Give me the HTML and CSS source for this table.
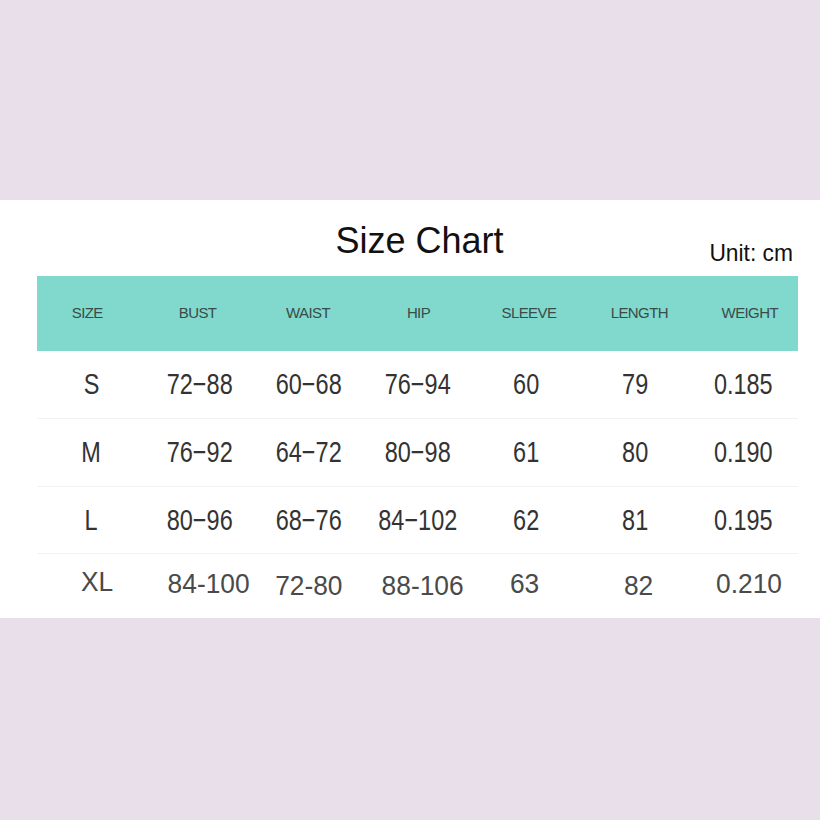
FILE: index.html
```html
<!DOCTYPE html>
<html>
<head>
<meta charset="utf-8">
<link rel="stylesheet" href="styles.css">
</head>
<body>
<div class="top"></div>
<section class="card">
  <div class="head">
    <div></div>
    <h1 class="title">Size Chart</h1>
    <div class="unit">Unit: cm</div>
  </div>
  <div class="table">
    <div class="hdr">
      <div class="cells">
        <span>SIZE</span><span>BUST</span><span>WAIST</span><span>HIP</span><span>SLEEVE</span><span>LENGTH</span><span>WEIGHT</span>
      </div>
    </div>
    <div class="row data r1">
      <span>S</span><span>72−88</span><span>60−68</span><span>76−94</span><span>60</span><span>79</span><span>0.185</span>
    </div>
    <div class="row data r2">
      <span>M</span><span>76−92</span><span>64−72</span><span>80−98</span><span>61</span><span>80</span><span>0.190</span>
    </div>
    <div class="row data r3">
      <span>L</span><span>80−96</span><span>68−76</span><span>84−102</span><span>62</span><span>81</span><span>0.195</span>
    </div>
    <div class="row data r4">
      <span class="c1">XL</span><span class="c2">84-100</span><span class="c3">72-80</span><span class="c4">88-106</span><span class="c5">63</span><span class="c6">82</span><span class="c7">0.210</span>
    </div>
  </div>
</section>
</body>
</html>
```
FILE: styles.css
```css
html, body {
  margin: 0;
  padding: 0;
  background: #e8dfeb;
  width: 820px;
  height: 820px;
  overflow: hidden;
}
.top { height: 200px; }
.card {
  background: #fff;
  height: 418px;
  font-family: "Liberation Sans", Arial, sans-serif;
  color: #333;
}
.head {
  height: 76px;
  display: grid;
  grid-template-columns: 1fr auto 1fr;
  align-items: start;
}
.title {
  margin: 21px 0 0;
  font-weight: normal;
  font-size: 36px;
  line-height: 40px;
  color: #111;
  padding-left: 19px;
}
.unit {
  justify-self: end;
  margin: 39px 27px 0 0;
  font-size: 24px;
  line-height: 28px;
  color: #111;
  display: inline-block;
  transform: scaleX(0.95);
  transform-origin: right center;
}
.table {
  margin-left: 37px;
  width: 761px;
}
.hdr {
  height: 75px;
  background: #80d9cc;
  display: flex;
  align-items: center;
}
.cells {
  margin: -3px -7px 0 -5px;
  flex: 1;
  display: grid;
  grid-template-columns: repeat(7, 1fr);
  text-align: center;
  font-size: 15px;
  color: #3a4b48;
  letter-spacing: -0.6px;
}
.row {
  display: grid;
  grid-template-columns: repeat(7, 1fr);
  align-items: center;
  text-align: center;
}
.data {
  font-size: 29px;
  color: #333;
  border-bottom: 1px solid #f2f2f2;
}
.data span {
  display: inline-block;
  justify-self: center;
  transform: scaleX(0.81);
}
.r1 { height: 67px; }
.r2 { height: 67px; }
.r3 { height: 66px; }
.r4 {
  height: 60px;
  padding-bottom: 6px;
  border-bottom: none;
  font-size: 28px;
  color: #4a4a4a;
}
.r4 span { transform: scaleX(0.94); }
.r4 .c1 { margin-left: 12px; margin-top: -4px; }
.r4 .c2 { margin-left: 18px; }
.r4 .c3 { margin-top: 4px; }
.r4 .c4 { margin-left: 10px; margin-top: 4px; }
.r4 .c5 { margin-right: 4px; }
.r4 .c6 { margin-left: 8px; margin-top: 4px; }
.r4 .c7 { margin-left: 10px; }
```
